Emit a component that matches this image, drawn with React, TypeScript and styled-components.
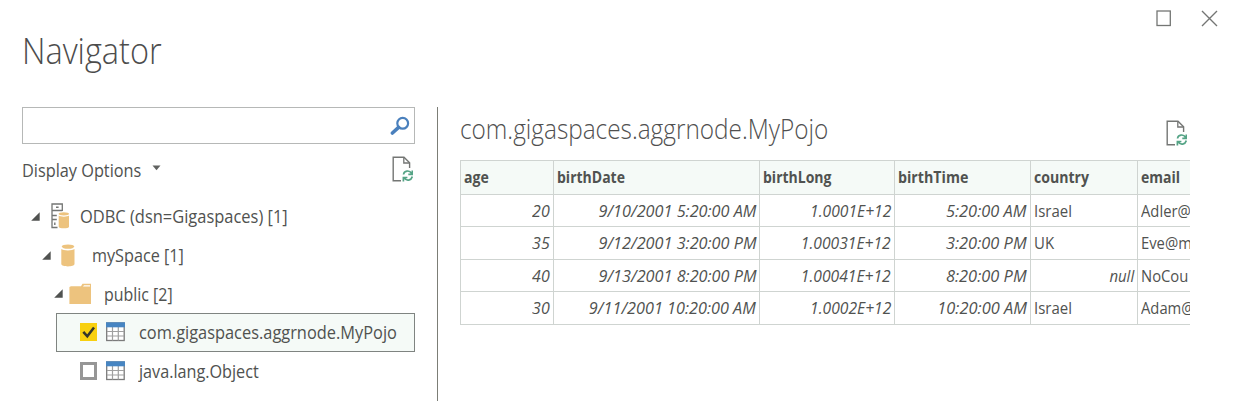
import React from 'react';
import styled, { createGlobalStyle } from 'styled-components';

const GlobalStyle = createGlobalStyle`
  * { box-sizing: border-box; }
  body { margin: 0; background: #fff; overflow: hidden; }
`;

const Window = styled.div`
  position: relative;
  width: 1238px;
  height: 401px;
  overflow: hidden;
  background: #fff;
  color: #505250;
  font-family: 'Open Sans', 'Noto Sans', sans-serif;
  display: flex;
  flex-direction: column;
`;

const TopBar = styled.header`
  height: 107px;
  flex: none;
  display: flex;
  justify-content: space-between;
  padding: 0 20px 0 22px;
`;

const Title = styled.h1`
  margin: 24px 0 0;
  font-size: 36px;
  line-height: 54px;
  font-weight: 300;
  color: #4c4c4c;
  white-space: nowrap;
`;

const WindowButtons = styled.div`
  display: flex;
  gap: 30px;
  padding-top: 10px;
`;

const Narrow = styled.span<{ $scale: number; $from?: 'left' | 'right' }>`
  display: inline-block;
  white-space: nowrap;
  transform: scaleX(${(p) => p.$scale});
  transform-origin: ${(p) => p.$from ?? 'left'} center;
`;

const Body = styled.main`
  flex: 1;
  display: flex;
  min-height: 0;
`;

const Sidebar = styled.aside`
  width: 438px;
  flex: none;
  padding-left: 22px;
  border-right: 1px solid #7c7e76;
`;

const SearchBox = styled.div`
  width: 393px;
  height: 37px;
  border: 1px solid #b6b8b7;
  display: flex;
  align-items: center;
  justify-content: flex-end;
  padding: 0 4.5px 0 0;
`;

const OptionsRow = styled.div`
  width: 393px;
  height: 53px;
  display: flex;
  align-items: center;
  padding-bottom: 2px;
  font-size: 18px;
`;

const OptionsLabel = styled.span`
  width: 130px;
`;

const Caret = styled.svg`
  margin-bottom: 4px;
`;

const RefreshSlot = styled.span`
  margin-left: auto;
  padding-right: 2px;
  padding-bottom: 1px;
  display: flex;
`;

const Tree = styled.div`
  width: 393px;
`;

const TreeRow = styled.div<{ $indent: number; $selected?: boolean }>`
  height: 38.7px;
  margin-left: ${(p) => p.$indent}px;
  display: flex;
  align-items: center;
  font-size: 18px;
  border: 1px solid ${(p) => (p.$selected ? '#7f8481' : 'transparent')};
  background: ${(p) => (p.$selected ? '#f5faf7' : 'transparent')};
`;

const IconCell = styled.span<{ $width: number }>`
  width: ${(p) => p.$width}px;
  flex: none;
  display: flex;
`;

const Checkbox = styled.span<{ $checked?: boolean }>`
  width: 17px;
  height: 18px;
  margin: 0 9px 1px 23px;
  flex: none;
  display: flex;
  border: ${(p) => (p.$checked ? '0' : '3px solid #969696')};
  background: ${(p) => (p.$checked ? '#f8d00f' : '#fff')};
`;

const Preview = styled.section`
  width: 752px;
  padding-left: 22px;
  min-width: 0;
`;

const PreviewHeader = styled.div`
  height: 53px;
  display: flex;
  justify-content: space-between;
  padding-right: 3px;
`;

const PreviewTitle = styled.h2`
  margin: 3px 0 0;
  font-size: 27px;
  line-height: 38px;
  font-weight: 300;
  color: #505050;
  white-space: nowrap;
`;

const PreviewRefresh = styled.span`
  padding-top: 13px;
`;

const TableClip = styled.div`
  width: 730px;
  overflow: hidden;
`;

const Grid = styled.div`
  width: 800px;
  display: grid;
  grid-template-columns: 93px 206px 135px 136px 107px 122px;
  grid-template-rows: 34px 32px 33px 32px 33px;
  border-top: 1px solid #cfd4d1;
  border-left: 1px solid #cfd4d1;
`;

const Cell = styled.div<{ $head?: boolean; $right?: boolean }>`
  display: flex;
  align-items: center;
  justify-content: ${(p) => (p.$right ? 'flex-end' : 'flex-start')};
  padding: 0 3px 1px;
  min-width: 0;
  font-size: ${(p) => (p.$head ? 16 : 17)}px;
  font-weight: ${(p) => (p.$head ? 700 : 400)};
  font-style: ${(p) => (p.$right ? 'italic' : 'normal')};
  background: ${(p) => (p.$head ? '#f5faf7' : '#fff')};
  border-right: 1px solid #cfd4d1;
  border-bottom: 1px solid #cfd4d1;
`;

const SearchIcon = () => (
  <svg width="20" height="20" viewBox="0 0 20 20" fill="none" stroke="#4a80bd">
    <circle cx="12.7" cy="7.3" r="5.4" strokeWidth="2.2" />
    <path d="M8.6 11.4 2.4 17" strokeWidth="3.6" strokeLinecap="round" />
  </svg>
);

const RefreshIcon = () => (
  <svg width="21" height="26" viewBox="0 0 21 26" fill="none">
    <path d="M9 24.8H1.2V1.2H12l5.6 5.6V12" stroke="#747674" strokeWidth="1.4" />
    <path d="M11.8 1.2V7h5.8" stroke="#747674" strokeWidth="1.3" />
    <path d="M11.5 18.5c.5-4 6-4.8 8-1.2M20.3 14.5v3.8h-4M20.3 20.5c-.8 4-6 5-8 1.4M11.4 25.5v-4h4" stroke="#55a486" strokeWidth="1.7" />
  </svg>
);

const Expander = () => (
  <svg width="9" height="9" viewBox="0 0 9 9">
    <path d="M8.7.2v8.5H.2z" fill="#505250" />
  </svg>
);

const ServerIcon = () => (
  <svg width="19" height="26" viewBox="0 0 19 26" fill="none">
    <path d="M11.3 8V1H1v23.5h5.5M1 7.5h10.300M1 12.500h4.800M1 16.500h4.800" stroke="#747674" strokeWidth="1.3" />
    <path d="M5 4.3h2.600M3.8 19.500v2.500" stroke="#747674" strokeWidth="1.4" />
    <path d="M7.700 12.500v11.300c0 2 10.300 2 10.300 0V12.500c-1.500 1.500-8.800 1.500-10.300 0z" fill="#edc37e" />
    <ellipse cx="12.8" cy="10.8" rx="5.2" ry="1.6" fill="#edc37e" />
  </svg>
);

const DatabaseIcon = () => (
  <svg width="14" height="23" viewBox="0 0 14 23" fill="#edc37e">
    <ellipse cx="7" cy="2.6" rx="6.3" ry="2.2" />
    <path d="M.3 5v15c0 3.200 13.200 3.200 13.200 0V5c-1.600 1.900-11.600 1.900-13.200 0z" />
  </svg>
);

const FolderIcon = () => (
  <svg width="23" height="22" viewBox="0 0 23 22">
    <path d="M.4 21V4L2 3.200h10L13.500.8H22V21z" fill="#edc37e" />
    <path d="M14 3.500l1-1.300h6v1.300z" fill="#fff" />
  </svg>
);

const TableIcon = () => (
  <svg width="19" height="20" viewBox="0 0 19 20">
    <rect x=".7" y="1" width="17.500" height="17.500" fill="#fff" stroke="#7b7b7b" strokeWidth="1.300" />
    <path d="M1 9.500h17M1 14h17M6.500 5v13.500M12.300 5v13.500" stroke="#a0a0a0" strokeWidth="1.200" />
    <rect y=".3" width="19" height="5" fill="#4785c2" />
  </svg>
);

const columns = [
  { name: 'age', scale: 0.88, cellScale: 0.94 },
  { name: 'birthDate', scale: 0.875, cellScale: 0.955 },
  { name: 'birthLong', scale: 0.875, cellScale: 0.92 },
  { name: 'birthTime', scale: 0.89, cellScale: 0.965 },
  { name: 'country', scale: 0.88, cellScale: 0.88 },
  { name: 'email', scale: 0.875, cellScale: 0.87 },
];

const rows = [
  ['20', '9/10/2001 5:20:00 AM', '1.0001E+12', '5:20:00 AM', 'Israel', 'Adler@'],
  ['35', '9/12/2001 3:20:00 PM', '1.00031E+12', '3:20:00 PM', 'UK', 'Eve@m'],
  ['40', '9/13/2001 8:20:00 PM', '1.00041E+12', '8:20:00 PM', 'null', 'NoCou'],
  ['30', '9/11/2001 10:20:00 AM', '1.0002E+12', '10:20:00 AM', 'Israel', 'Adam@'],
];

export default function App() {
  return (
    <Window>
      <GlobalStyle />
      <TopBar>
        <Title><Narrow $scale={0.903}>Navigator</Narrow></Title>
        <WindowButtons>
          <svg width="15" height="17" viewBox="0 0 15 17" fill="none" stroke="#747674" strokeWidth="1.300">
            <rect x="1" y="1" width="13.300" height="14.500" />
          </svg>
          <svg width="17" height="17" viewBox="0 0 17 17" stroke="#747674" strokeWidth="1.400">
            <path d="M1 1l15 15M16 1L1 16" />
          </svg>
        </WindowButtons>
      </TopBar>
      <Body>
        <Sidebar>
          <SearchBox><SearchIcon /></SearchBox>
          <OptionsRow>
            <OptionsLabel><Narrow $scale={0.905}>Display Options</Narrow></OptionsLabel>
            <Caret width="9" height="6" viewBox="0 0 9 6"><path d="M.5.5h8l-4 4.800z" fill="#606260" /></Caret>
            <RefreshSlot><RefreshIcon /></RefreshSlot>
          </OptionsRow>
          <Tree>
            <TreeRow $indent={8}>
              <IconCell $width={20}><Expander /></IconCell>
              <IconCell $width={29}><ServerIcon /></IconCell>
              <Narrow $scale={0.914}>ODBC (dsn=Gigaspaces) [1]</Narrow>
            </TreeRow>
            <TreeRow $indent={19}>
              <IconCell $width={19}><Expander /></IconCell>
              <IconCell $width={31}><DatabaseIcon /></IconCell>
              <Narrow $scale={0.9}>mySpace [1]</Narrow>
            </TreeRow>
            <TreeRow $indent={31}>
              <IconCell $width={15}><Expander /></IconCell>
              <IconCell $width={35}><FolderIcon /></IconCell>
              <Narrow $scale={0.885}>public [2]</Narrow>
            </TreeRow>
            <TreeRow $indent={34} $selected>
              <Checkbox $checked>
                <svg width="17" height="18" viewBox="0 0 17 18" fill="none" stroke="#34362c" strokeWidth="2.500">
                  <path d="M3.300 8.800l4 4.500L14 4.500" />
                </svg>
              </Checkbox>
              <IconCell $width={33}><TableIcon /></IconCell>
              <Narrow $scale={0.91}>com.gigaspaces.aggrnode.MyPojo</Narrow>
            </TreeRow>
            <TreeRow $indent={34}>
              <Checkbox />
              <IconCell $width={33}><TableIcon /></IconCell>
              <Narrow $scale={0.9}>java.lang.Object</Narrow>
            </TreeRow>
          </Tree>
        </Sidebar>
        <Preview>
          <PreviewHeader>
            <PreviewTitle><Narrow $scale={0.902}>com.gigaspaces.aggrnode.MyPojo</Narrow></PreviewTitle>
            <PreviewRefresh><RefreshIcon /></PreviewRefresh>
          </PreviewHeader>
          <TableClip>
            <Grid>
              {columns.map((c) => (
                <Cell key={c.name} $head><Narrow $scale={c.scale}>{c.name}</Narrow></Cell>
              ))}
              {rows.map((row, r) =>
                row.map((value, c) => {
                  const right = c < 4 || value === 'null';
                  return (
                    <Cell key={`${r}-${c}`} $right={right}>
                      <Narrow $scale={columns[c].cellScale} $from={right ? 'right' : 'left'}>{value}</Narrow>
                    </Cell>
                  );
                }),
              )}
            </Grid>
          </TableClip>
        </Preview>
      </Body>
    </Window>
  );
}
